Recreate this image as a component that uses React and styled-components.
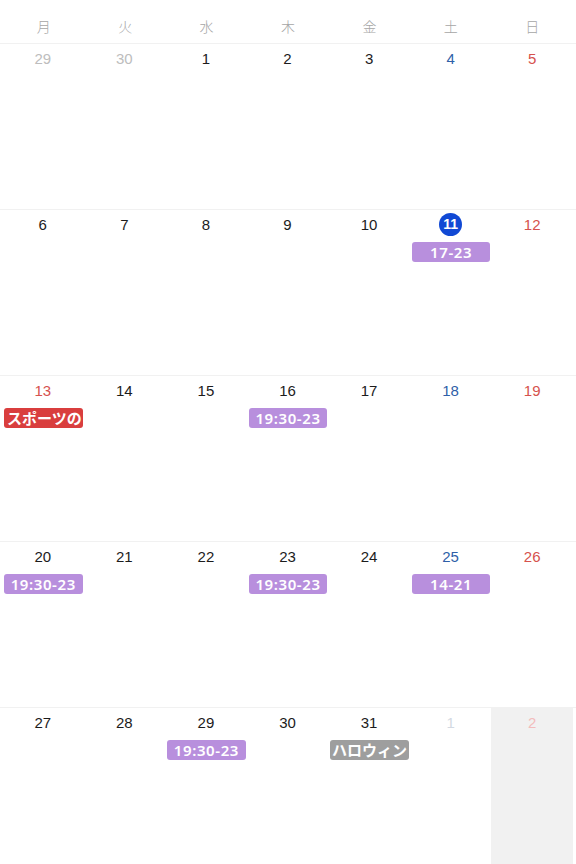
import React from "react"
import styled, { createGlobalStyle } from "styled-components"

const GlobalStyle = createGlobalStyle`
  html, body {
    margin: 0;
    padding: 0;
    background: #ffffff;
    overflow: hidden;
  }
  body {
    font-family: "Liberation Sans", "Noto Sans CJK JP", sans-serif;
  }
`

const Calendar = styled.div`
  width: 576px;
  height: 864px;
  overflow: hidden;
  background: #fff;
`

const HeaderRow = styled.div`
  display: grid;
  grid-template-columns: repeat(7, 1fr);
  padding: 0 3px;
  height: 43px;
  border-bottom: 1px solid #f1f1f1;
`

const WeekdayLabel = styled.div`
  display: flex;
  align-items: center;
  justify-content: center;
  font-size: 14px;
  color: #a6a6a6;
  font-family: "Noto Sans CJK JP", sans-serif;
  font-weight: 300;
  padding-top: 8px;
`

const WeekRow = styled.div`
  display: grid;
  grid-template-columns: repeat(7, 1fr);
  padding: 0 3px 0 2px;
  height: 165px;
  border-bottom: 1px solid #f1f1f1;
`

const DayCell = styled.div`
  display: flex;
  flex-direction: column;
  align-items: stretch;
  min-width: 0;
  background: ${(p) => (p.$shaded ? "#f1f1f1" : "transparent")};
  height: ${(p) => (p.$shaded ? "200px" : "auto")};
`

const dayColors = {
  normal: "#1c1c1c",
  sat: "#2f5fa8",
  sun: "#d6524d",
  out: "#bdbdbd",
  outSat: "#d3d9e2",
  outSun: "#f3bcbc",
}

const NumberWrap = styled.div`
  height: 28px;
  display: flex;
  align-items: center;
  justify-content: center;
`

const DayNumber = styled.span`
  font-size: 15px;
  color: ${(p) => dayColors[p.$kind]};
`

const TodayNumber = styled.span`
  width: 23px;
  height: 23px;
  border-radius: 50%;
  background: #1149d4;
  color: #fff;
  font-size: 14px;
  font-weight: bold;
  display: flex;
  align-items: center;
  justify-content: center;
`

const pillColors = {
  purple: "#b88fdd",
  red: "#d93e3e",
  grey: "#9e9e9e",
}

const Pill = styled.div`
  margin: 4px 1px 0 2px;
  height: 20px;
  line-height: 20px;
  border-radius: 3px;
  background: ${(p) => pillColors[p.$color]};
  color: #fff;
  font-size: 15px;
  font-weight: 600;
  font-family: "Noto Sans", "Noto Sans CJK JP", sans-serif;
  text-align: center;
  white-space: nowrap;
  overflow: hidden;
  padding: 0 ${(p) => (p.$color === "red" ? "3px" : "0")};
  letter-spacing: ${(p) => (p.$color === "purple" ? "0.6px" : "0")};
`

const weeks = [
  [
    { n: 29, k: "out" }, { n: 30, k: "out" }, { n: 1, k: "normal" }, { n: 2, k: "normal" },
    { n: 3, k: "normal" }, { n: 4, k: "sat" }, { n: 5, k: "sun" },
  ],
  [
    { n: 6, k: "normal" }, { n: 7, k: "normal" }, { n: 8, k: "normal" }, { n: 9, k: "normal" },
    { n: 10, k: "normal" }, { n: 11, k: "sat", today: true, ev: { t: "17-23", c: "purple" } },
    { n: 12, k: "sun" },
  ],
  [
    { n: 13, k: "sun", ev: { t: "スポーツの日", c: "red" } }, { n: 14, k: "normal" },
    { n: 15, k: "normal" }, { n: 16, k: "normal", ev: { t: "19:30-23", c: "purple" } },
    { n: 17, k: "normal" }, { n: 18, k: "sat" }, { n: 19, k: "sun" },
  ],
  [
    { n: 20, k: "normal", ev: { t: "19:30-23", c: "purple" } }, { n: 21, k: "normal" },
    { n: 22, k: "normal" }, { n: 23, k: "normal", ev: { t: "19:30-23", c: "purple" } },
    { n: 24, k: "normal" }, { n: 25, k: "sat", ev: { t: "14-21", c: "purple" } },
    { n: 26, k: "sun" },
  ],
  [
    { n: 27, k: "normal" }, { n: 28, k: "normal" },
    { n: 29, k: "normal", ev: { t: "19:30-23", c: "purple" } }, { n: 30, k: "normal" },
    { n: 31, k: "normal", ev: { t: "ハロウィン", c: "grey" } }, { n: 1, k: "outSat" },
    { n: 2, k: "outSun", shaded: true },
  ],
]

const weekdays = ["月", "火", "水", "木", "金", "土", "日"]

export default function App() {
  return (
    <Calendar>
      <GlobalStyle />
      <HeaderRow>
        {weekdays.map((w) => (
          <WeekdayLabel key={w}>{w}</WeekdayLabel>
        ))}
      </HeaderRow>
      {weeks.map((week, i) => (
        <WeekRow key={i}>
          {week.map((d, j) => (
            <DayCell key={j} $shaded={d.shaded}>
              <NumberWrap>
                {d.today ? (
                  <TodayNumber>{d.n}</TodayNumber>
                ) : (
                  <DayNumber $kind={d.k}>{d.n}</DayNumber>
                )}
              </NumberWrap>
              {d.ev && <Pill $color={d.ev.c}>{d.ev.t}</Pill>}
            </DayCell>
          ))}
        </WeekRow>
      ))}
    </Calendar>
  )
}
